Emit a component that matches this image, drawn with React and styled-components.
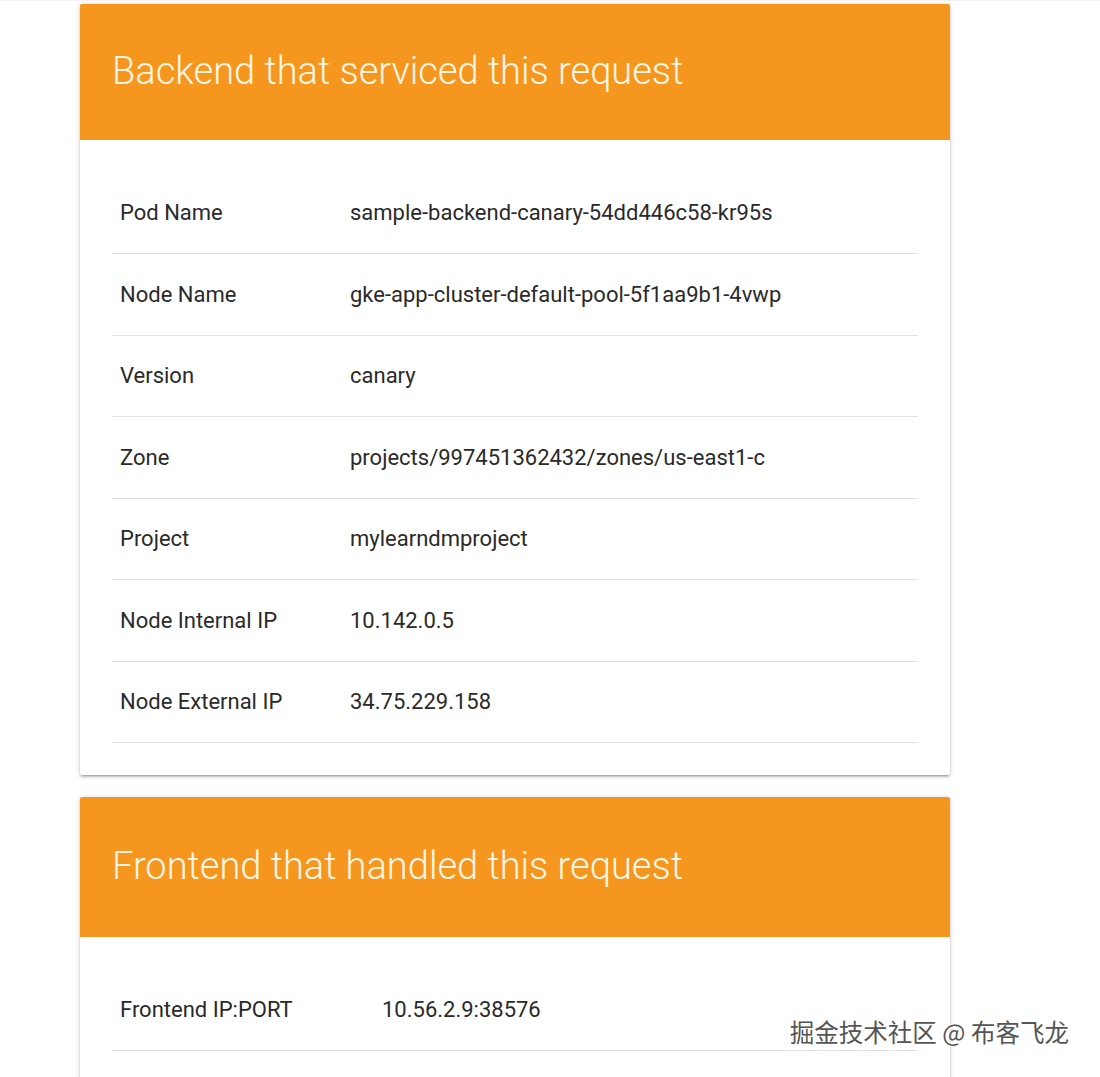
import React from "react";
import styled, { createGlobalStyle } from "styled-components";

const Global = createGlobalStyle`
  html, body { margin: 0; padding: 0; background: #ffffff; }
  body { font-family: Roboto, "Noto Sans", "Liberation Sans", sans-serif; }
`;

const Page = styled.div`
  position: relative;
  height: 1077px;
  overflow: hidden;
  padding: 3px 0 0 80px;
  box-sizing: border-box;
  border-top: 1px solid #f3f3f3;
`;

const Column = styled.div`
  width: 870px;
  display: flex;
  flex-direction: column;
  gap: 22px;
`;

const Card = styled.section`
  background: #ffffff;
  box-shadow: 0 2px 2px 0 rgba(0,0,0,0.14), 0 3px 1px -2px rgba(0,0,0,0.12), 0 1px 5px 0 rgba(0,0,0,0.2);
  border-radius: 2px;
`;

const Header = styled.header`
  background: #f5961f;
  height: ${p => p.$h}px;
  display: flex;
  align-items: center;
  padding: 0 32px 3px;
  box-sizing: border-box;
  border-radius: 2px 2px 0 0;
`;

const Title = styled.h2`
  margin: 0;
  font-family: Roboto, sans-serif;
  font-weight: 300;
  font-size: 38px;
  color: #fff6e6;
  letter-spacing: 0;
`;

const Body = styled.div`
  padding: 32px 32px ${p => p.$pb}px 32px;
`;

const Table = styled.table`
  width: 100%;
  border-collapse: collapse;
  table-layout: fixed;
`;

const Row = styled.tr`
  border-bottom: 1px solid #e2e2e2;
`;

const Label = styled.td`
  width: ${p => p.$w}px;
  box-sizing: border-box;
  padding: 0 8px;
  height: 81.5px;
  font-size: 22px;
  color: #2a2a2a;
  vertical-align: middle;
  white-space: nowrap;
`;

const Value = styled.td`
  padding: 0;
  font-size: 22px;
  color: #2a2a2a;
  vertical-align: middle;
  white-space: nowrap;
`;

const Watermark = styled.div`
  position: absolute;
  right: 31px;
  top: 1013px;
  font-family: "Noto Sans CJK SC", sans-serif;
  font-size: 24.5px;
  color: #555555;
  text-shadow: 0 0 2px #fff, 0 0 2px #fff, 1px 1px 1px #fff;
  letter-spacing: 0;
`;

const backend = [
  ["Pod Name", "sample-backend-canary-54dd446c58-kr95s"],
  ["Node Name", "gke-app-cluster-default-pool-5f1aa9b1-4vwp"],
  ["Version", "canary"],
  ["Zone", "projects/997451362432/zones/us-east1-c"],
  ["Project", "mylearndmproject"],
  ["Node Internal IP", "10.142.0.5"],
  ["Node External IP", "34.75.229.158"],
];

const frontend = [["Frontend IP:PORT", "10.56.2.9:38576"]];

function InfoCard({ title, rows, labelWidth, headerHeight, bottomPad }) {
  return (
    <Card>
      <Header $h={headerHeight}>
        <Title>{title}</Title>
      </Header>
      <Body $pb={bottomPad}>
        <Table>
          <tbody>
            {rows.map(([k, v]) => (
              <Row key={k}>
                <Label $w={labelWidth}>{k}</Label>
                <Value>{v}</Value>
              </Row>
            ))}
          </tbody>
        </Table>
      </Body>
    </Card>
  );
}

export default function App() {
  return (
    <>
      <Global />
      <Page>
        <Column>
          <InfoCard
            title="Backend that serviced this request"
            rows={backend}
            labelWidth={238}
            headerHeight={136}
            bottomPad={32}
          />
          <InfoCard
            title="Frontend that handled this request"
            rows={frontend}
            labelWidth={270}
            headerHeight={140}
            bottomPad={80}
          />
        </Column>
        <Watermark>掘金技术社区 @ 布客飞龙</Watermark>
      </Page>
    </>
  );
}
